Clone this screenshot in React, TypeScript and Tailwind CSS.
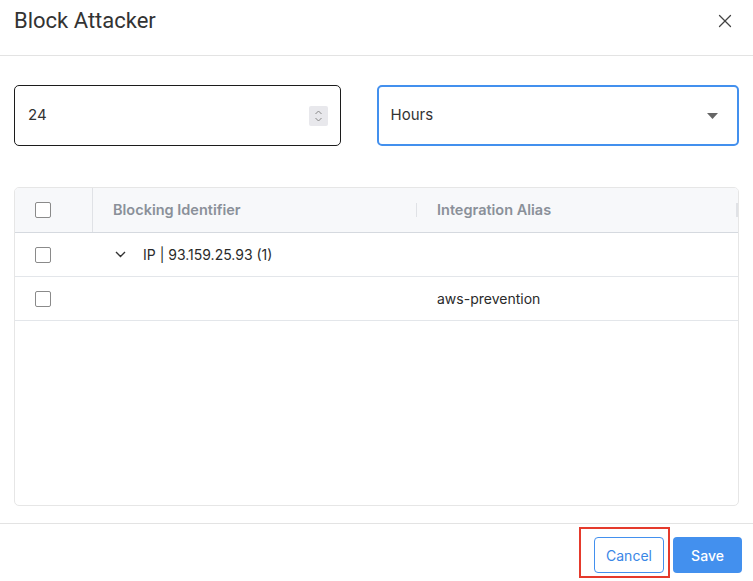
import { X } from "lucide-react";

const ROWS = [
  { id: "ip", expandable: true, identifier: "IP | 93.159.25.93 (1)", alias: "" },
  { id: "aws", expandable: false, identifier: "", alias: "aws-prevention" },
];

function Checkbox() {
  return <span className="block h-[16px] w-[16px] rounded-[2px] border-[1.5px] border-[#8a8a8a] bg-white" />;
}

export default function App() {
  return (
    <div className="flex h-[581px] w-[753px] flex-col overflow-hidden bg-white text-[#333] [font-family:Inter,'Liberation_Sans',sans-serif]">
      <div className="flex h-[56px] shrink-0 items-start justify-between border-b border-[#e3e3e3] pl-[14px] pr-[17px]">
        <h2 className="mt-[7px] text-[22px] leading-[28px] font-normal text-[#333] [font-family:Roboto,'Liberation_Sans',sans-serif]">
          Block Attacker
        </h2>
        <button type="button" className="mt-[10px] text-[#444]" aria-label="Close">
          <X size={22} strokeWidth={1.4} />
        </button>
      </div>

      <div className="flex shrink-0 gap-[36px] px-[14px] pt-[29px]">
        <div className="flex h-[61px] w-[328px] items-center justify-between rounded-[5px] border border-[#1c1c1c] pl-[13px] pr-[12px]">
          <span className="text-[15px]">24</span>
          <span className="flex h-[20px] w-[19px] flex-col items-center justify-center rounded-[2px] bg-[#e8e8ec]">
            <svg width="9" height="14" viewBox="0 0 9 14" fill="none" stroke="#888" strokeWidth="1">
              <path d="M1.5 5 L4.5 2 L7.5 5" />
              <path d="M1.5 9 L4.5 12 L7.5 9" />
            </svg>
          </span>
        </div>
        <div className="flex h-[61px] w-[364px] items-center justify-between rounded-[5px] border-2 border-[#4390ee] pl-[12px] pr-[19px]">
          <span className="text-[15px]">Hours</span>
          <svg width="11" height="6" viewBox="0 0 11 6">
            <path d="M0 0 L11 0 L5.5 6 Z" fill="#666" />
          </svg>
        </div>
      </div>

      <div className="mx-[14px] mt-[41px] h-[319px] shrink-0 overflow-hidden rounded-[5px] border border-[#e6e6e6]">
        <div className="flex h-[45px] items-center border-b border-[#d5d9df] bg-[#f7f8fa] text-[14.5px] font-semibold text-[#8a9099]">
          <div className="flex h-full w-[78px] items-center border-r border-[#e0e2e6] pl-[20px]">
            <Checkbox />
          </div>
          <div className="flex h-full w-[324px] items-center justify-between pl-[20px]">
            <span>Blocking Identifier</span>
            <span className="h-[14px] w-[1px] bg-[#e0e2e6]" />
          </div>
          <div className="flex h-full flex-1 items-center justify-between pl-[20px]">
            <span>Integration Alias</span>
            <span className="h-[14px] w-[2px] bg-[#e0e2e6]" />
          </div>
        </div>
        {ROWS.map((row) => (
          <div key={row.id} className="flex h-[44px] items-center border-b border-[#e3e6ea] text-[14px] text-[#2a2a2a]">
            <div className="flex w-[78px] items-center pl-[20px]">
              <Checkbox />
            </div>
            <div className="flex w-[324px] items-center pl-[22px]">
              {row.expandable ? (
                <>
                  <svg width="11" height="7" viewBox="0 0 11 7" fill="none" stroke="#333" strokeWidth="1.4">
                    <path d="M1 1 L5.5 5.5 L10 1" />
                  </svg>
                  <span className="ml-[17px]">{row.identifier}</span>
                </>
              ) : null}
            </div>
            <div className="flex-1 pl-[20px]">{row.alias}</div>
          </div>
        ))}
      </div>

      <div className="mt-[17px] flex flex-1 items-start justify-end gap-[9px] border-t border-[#e3e3e3] pr-[11px] pt-[13px]">
        <div className="relative">
          <button
            type="button"
            className="h-[36px] w-[70px] rounded-[4px] border border-[#4390ee] bg-white text-[14px] text-[#3a86e6]"
          >
            Cancel
          </button>
          <span className="pointer-events-none absolute -top-[10px] -bottom-[5px] -left-[15px] -right-[6px] border-2 border-[#e53a2c]" />
        </div>
        <button
          type="button"
          className="h-[36px] w-[69px] rounded-[4px] bg-[#4390ee] text-[14px] font-medium text-white"
        >
          Save
        </button>
      </div>
    </div>
  );
}
